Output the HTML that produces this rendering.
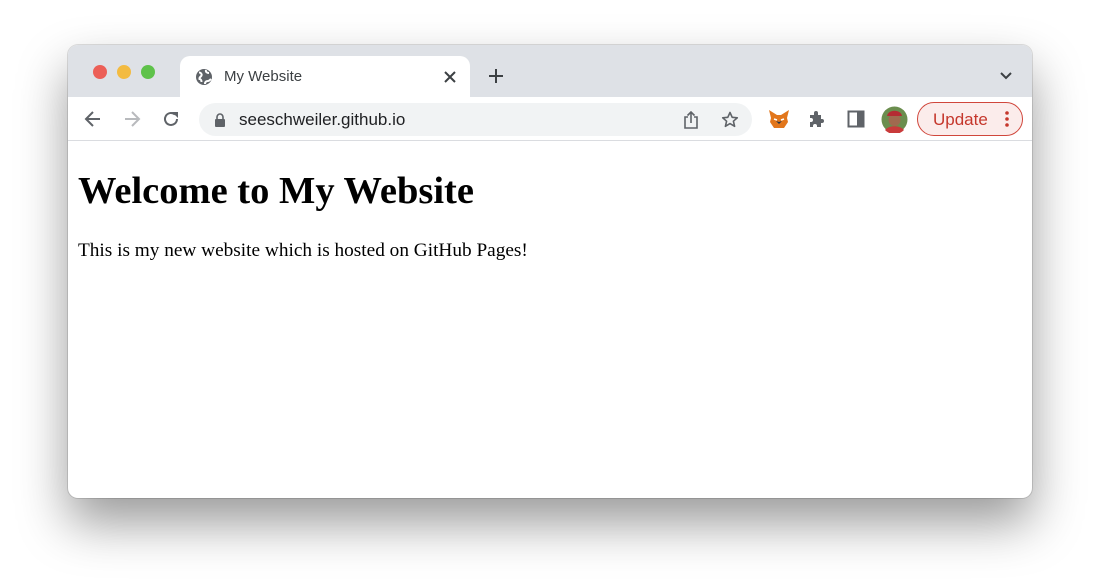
<!DOCTYPE html>
<html><head><meta charset="utf-8"><style>
*{margin:0;padding:0;box-sizing:border-box}
body{width:1100px;height:588px;background:#fff;position:relative;overflow:hidden;font-family:"Liberation Sans",sans-serif}
.win{position:absolute;left:68px;top:45px;width:964px;height:453px;border-radius:10px;background:#fff;box-shadow:0 25px 50px rgba(0,0,0,0.4),0 0 0 1px rgba(0,0,0,0.12);overflow:hidden}
.strip{position:absolute;left:0;top:0;width:964px;height:52px;background:#dee1e6}
.dot{position:absolute;top:20px;width:14px;height:14px;border-radius:50%}
.tab{position:absolute;left:112px;top:11px;width:290px;height:42px;background:#fff;border-radius:10px 10px 0 0}
.tab span{position:absolute;left:44px;top:12px;font-size:15px;color:#3c4043}
.tb{position:absolute;left:0;top:52px;width:964px;height:44px;background:#fff;border-bottom:1px solid #dadce0}
.omni{position:absolute;left:131px;top:6px;width:553px;height:33px;background:#f1f3f4;border-radius:17px}
.omni span{position:absolute;left:40px;top:7px;font-size:17px;color:#202124}
.upd{position:absolute;left:849px;top:5px;width:106px;height:34px;border:1.5px solid #d0463b;border-radius:17px;background:#fbeceb}
.upd span{position:absolute;left:15px;top:7px;font-size:17px;color:#c5372c}
h1{position:absolute;left:10px;top:124px;font:bold 38.5px "Liberation Serif",serif;color:#000}
p{position:absolute;left:10px;top:195px;font:19.3px "Liberation Serif",serif;color:#000}
svg{position:absolute}
</style></head><body>
<div class="win">
<div class="strip"></div>
<div class="dot" style="left:25px;background:#ec5f57"></div>
<div class="dot" style="left:49px;background:#f3bb41"></div>
<div class="dot" style="left:73px;background:#5ec24a"></div>
<div class="tab"><svg style="left:15px;top:12px" width="18" height="18" viewBox="0 0 18 18"><circle cx="9" cy="9" r="8" fill="#5f6368"/><path d="M4 4.5c2 0 3 1.5 2.5 3S4 9 4.5 11c1 0 2 1 2 3M11 2c-.5 2 1 3 3 3M10 16c0-2 1-3 3-3 1 0 2-1 3-2" stroke="#fff" stroke-width="2" fill="none"/></svg><span>My Website</span>
<svg style="left:263px;top:14px" width="14" height="14" viewBox="0 0 14 14"><path d="M2 2L12 12M12 2L2 12" stroke="#3c4043" stroke-width="2"/></svg></div>
<svg style="left:420px;top:23px" width="16" height="16" viewBox="0 0 16 16"><path d="M8 1V15M1 8H15" stroke="#3c4043" stroke-width="2"/></svg>
<svg style="left:931px;top:26px" width="14" height="10" viewBox="0 0 14 10"><path d="M2 2L7 7L12 2" stroke="#3c4043" stroke-width="2" fill="none"/></svg>
<div class="tb">
<svg style="left:16px;top:13px" width="18" height="18" viewBox="0 0 18 18"><path d="M16 9H3M9 2L2 9L9 16" stroke="#5f6368" stroke-width="2" fill="none"/></svg>
<svg style="left:55px;top:13px" width="18" height="18" viewBox="0 0 18 18"><path d="M2 9H15M9 2L16 9L9 16" stroke="#b8babd" stroke-width="2" fill="none"/></svg>
<svg style="left:94px;top:13px" width="18" height="18" viewBox="0 0 18 18"><path d="M15 9A6 6 0 1 1 13 4.5" stroke="#5f6368" stroke-width="2" fill="none"/><path d="M10 2H16V8Z" fill="#5f6368"/></svg>
<div class="omni"><svg style="left:15px;top:10px" width="12" height="14" viewBox="0 0 12 14"><path d="M3 6V4a3 3 0 0 1 6 0v2" stroke="#5f6368" stroke-width="1.6" fill="none"/><rect x="1" y="6" width="10" height="8" rx="1" fill="#5f6368"/></svg><span>seeschweiler.github.io</span>
<svg style="left:484px;top:8px" width="16" height="18" viewBox="0 0 16 18"><path d="M5 6H2V17H14V6H11M8 12V1M4.5 4.5L8 1L11.5 4.5" stroke="#5f6368" stroke-width="1.6" fill="none"/></svg>
<svg style="left:522px;top:8px" width="18" height="18" viewBox="0 0 18 18"><path d="M9 1.5L11.2 6.3L16.3 6.8L12.4 10.2L13.6 15.3L9 12.6L4.4 15.3L5.6 10.2L1.7 6.8L6.8 6.3Z" stroke="#5f6368" stroke-width="1.6" fill="none" stroke-linejoin="round"/></svg></div>
<svg style="left:700px;top:12px" width="22" height="20" viewBox="0 0 22 20"><path d="M1 1L9 6H13L21 1L19 9L20 13L16 19H6L2 13L3 9Z" fill="#e2761b"/><path d="M8 12L11 15L14 12L11 13Z" fill="#233447"/><path d="M6 10L9 11M16 10L13 11" stroke="#fff" stroke-width="1.5"/></svg>
<svg style="left:740px;top:13px" width="18" height="18" viewBox="0 0 18 18"><path d="M2 5H6V3a2 2 0 0 1 4 0V5H13V9h1a2 2 0 0 1 0 4H13V17H9v-1a2 2 0 0 0-4 0v1H2V12h1a2 2 0 0 0 0-4H2Z" fill="#5f6368"/></svg>
<svg style="left:779px;top:13px" width="18" height="18" viewBox="0 0 18 18"><rect x="1.5" y="1.5" width="15" height="15" fill="none" stroke="#5f6368" stroke-width="2"/><rect x="10" y="2" width="6" height="14" fill="#5f6368"/></svg>
<svg style="left:813px;top:9px" width="27" height="27" viewBox="0 0 27 27"><circle cx="13.5" cy="13.5" r="13" fill="#6b8e4e"/><circle cx="13.5" cy="14" r="6" fill="#a06a4f"/><path d="M6 10C7 3 20 3 21 10Z" fill="#b52b33"/><path d="M4 24C8 19 19 19 23 24A13 13 0 0 1 4 24Z" fill="#c93b3b"/></svg>
<div class="upd"><span>Update</span><svg style="left:86px;top:7px" width="6" height="18" viewBox="0 0 6 18"><circle cx="3" cy="3" r="1.8" fill="#c5372c"/><circle cx="3" cy="9" r="1.8" fill="#c5372c"/><circle cx="3" cy="15" r="1.8" fill="#c5372c"/></svg></div>
</div>
<h1>Welcome to My Website</h1>
<p>This is my new website which is hosted on GitHub Pages!</p>
</div>
</body></html>
